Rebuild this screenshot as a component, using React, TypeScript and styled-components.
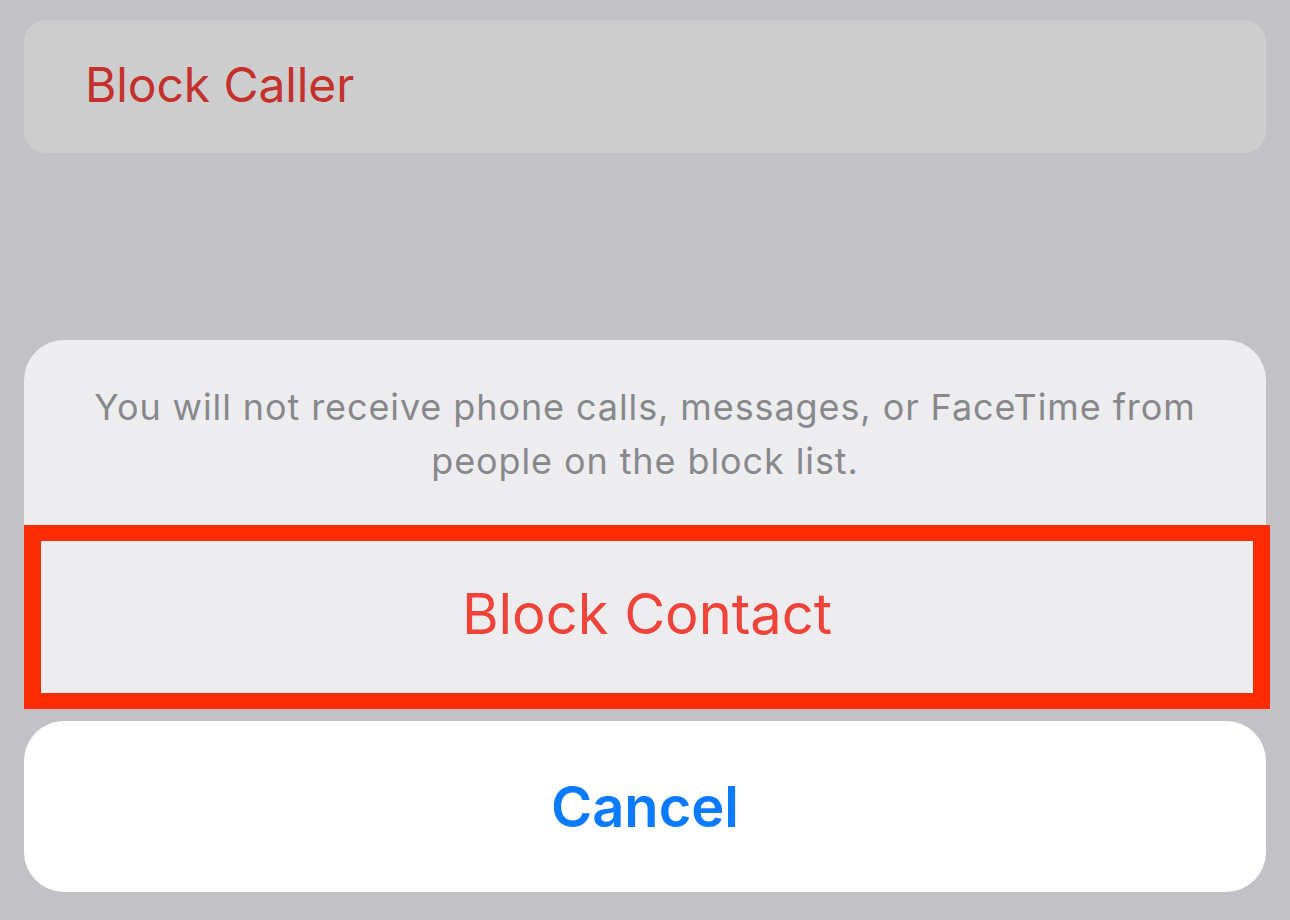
import styled, { createGlobalStyle } from "styled-components";

const GlobalStyle = createGlobalStyle`
  html, body {
    margin: 0;
    padding: 0;
    background: #c2c1c6;
  }
  body {
    font-family: Inter, "Noto Sans", "Liberation Sans", sans-serif;
    -webkit-font-smoothing: antialiased;
  }
`;

const Screen = styled.div`
  width: 1290px;
  height: 920px;
  box-sizing: border-box;
  padding: 20px 24px 0 24px;
  display: flex;
  flex-direction: column;
  overflow: hidden;
`;

const Row = styled.div`
  height: 133px;
  background: #cdcdce;
  border-radius: 22px;
  display: flex;
  align-items: center;
  padding-left: 61px;
`;

const RowLabel = styled.span`
  color: #c4302b;
  font-size: 48px;
  letter-spacing: -0.1px;
  padding-bottom: 4px;
`;

const Sheet = styled.div`
  margin-top: 187px;
  background: #ededf0;
  border-radius: 40px 40px 0 0;
  display: flex;
  flex-direction: column;
`;

const Message = styled.p`
  margin: 0;
  height: 185px;
  box-sizing: border-box;
  padding: 40px 30px 0;
  text-align: center;
  color: #88888c;
  font-size: 36px;
  letter-spacing: 0.9px;
  line-height: 54px;
`;

const Highlight = styled.div`
  border: 17px solid #fd2b04;
  border-top-width: 16px;
  border-bottom-width: 16px;
  margin-right: -4px;
`;

const ActionButton = styled.button<{ $tone: "danger" | "primary" }>`
  width: 100%;
  border: none;
  background: transparent;
  font-family: inherit;
  cursor: pointer;
  display: flex;
  align-items: center;
  justify-content: center;
  color: ${(p) => (p.$tone === "danger" ? "#f0433a" : "#0a7aff")};
  font-weight: ${(p) => (p.$tone === "danger" ? 400 : 600)};
`;

const DestructiveButton = styled(ActionButton)`
  height: 152px;
  font-size: 56px;
  padding-bottom: 8px;
`;

const CancelCard = styled(ActionButton)`
  margin-top: 12px;
  height: 171px;
  background: #ffffff;
  border-radius: 40px;
  font-size: 56px;
`;

export default function App() {
  return (
    <>
      <GlobalStyle />
      <Screen>
        <Row>
          <RowLabel>Block Caller</RowLabel>
        </Row>
        <Sheet>
          <Message>
            You will not receive phone calls, messages, or FaceTime from
            <br />
            people on the block list.
          </Message>
          <Highlight>
            <DestructiveButton $tone="danger">Block Contact</DestructiveButton>
          </Highlight>
        </Sheet>
        <CancelCard $tone="primary">Cancel</CancelCard>
      </Screen>
    </>
  );
}
